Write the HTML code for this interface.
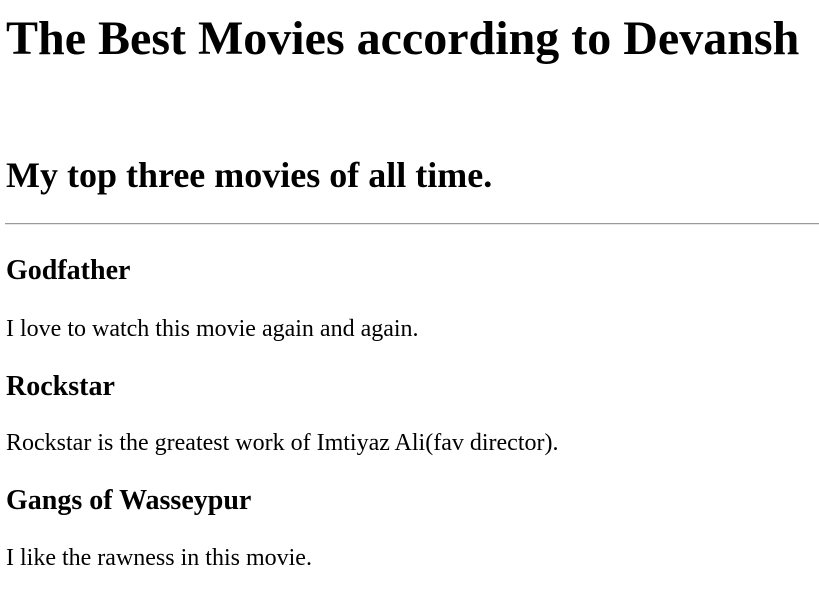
<!DOCTYPE html>
<html><head><meta charset="utf-8"><style>
html,body{margin:0;padding:0;background:#fff;width:819px;height:610px;overflow:hidden}
body{font-family:"Liberation Serif",serif;color:#000;position:relative}
.t{position:absolute;left:6px;line-height:1;white-space:nowrap;margin:0}
.h1{font-size:48px;font-weight:bold}
.h2{font-size:36px;font-weight:bold}
.h3{font-size:28px;font-weight:bold}
.p{font-size:24px}
.hr{position:absolute;left:5px;right:0;top:223px;height:1px;background:#9a9a9a;border-bottom:1px solid #e6e6e6}
</style></head><body>
<div class="t h1" style="top:14.5px">The Best Movies according to Devansh</div>
<div class="t h2" style="top:156.5px">My top three movies of all time.</div>
<div class="hr"></div>
<div class="t h3" style="top:257px">Godfather</div>
<div class="t p" style="top:316.8px">I love to watch this movie again and again.</div>
<div class="t h3" style="top:372.6px">Rockstar</div>
<div class="t p" style="top:431px">Rockstar is the greatest work of Imtiyaz Ali(fav director).</div>
<div class="t h3" style="top:487px">Gangs of Wasseypur</div>
<div class="t p" style="top:546px">I like the rawness in this movie.</div>
</body></html>
